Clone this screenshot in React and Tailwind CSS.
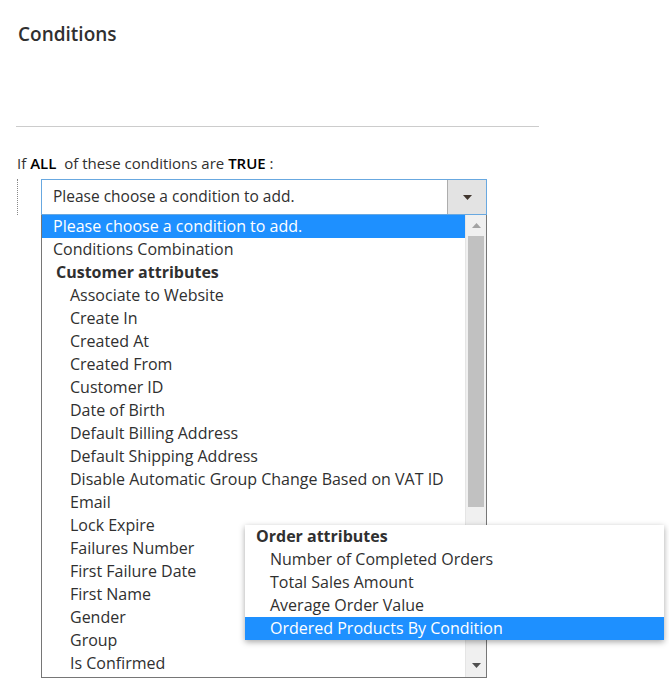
const customerAttrs = [
  'Associate to Website',
  'Create In',
  'Created At',
  'Created From',
  'Customer ID',
  'Date of Birth',
  'Default Billing Address',
  'Default Shipping Address',
  'Disable Automatic Group Change Based on VAT ID',
  'Email',
  'Lock Expire',
  'Failures Number',
  'First Failure Date',
  'First Name',
  'Gender',
  'Group',
  'Is Confirmed',
];

const orderAttrs = [
  'Number of Completed Orders',
  'Total Sales Amount',
  'Average Order Value',
  'Ordered Products By Condition',
];

function Caret({ up }) {
  return (
    <svg width="9" height="5" viewBox="0 0 9 5" className={up ? 'rotate-180' : ''}>
      <path d="M0 0h9L4.5 5z" fill="currentColor" />
    </svg>
  );
}

export default function App() {
  return (
    <div
      className="relative w-[669px] h-[678px] overflow-hidden bg-white text-[#303030]"
      style={{ fontFamily: '"Open Sans", "Noto Sans", sans-serif' }}
    >
      <h2 className="pt-[20px] pl-[18px] text-[19px] leading-[28px] font-semibold text-[#303030]">Conditions</h2>

      <div className="ml-[16px] mt-[78px] w-[523px] border-t border-[#cccccc]" />

      <p className="mt-[25px] pl-[17px] text-[15px] leading-[22px]">
        If <b className="font-semibold text-black">ALL</b>&nbsp; of these conditions are{' '}
        <b className="font-semibold text-black">TRUE</b> :
      </p>

      <div className="flex mt-[5px] pl-[17px]">
        <div className="w-0 h-[36px] border-l border-dotted border-[#888]" />
        <div className="ml-[23px] w-[446px]">
          {/* select box */}
          <div className="flex h-[36px] border border-[#68a8e0] bg-white">
            <div className="flex-1 pl-[11px] flex items-center text-[15.5px]">Please choose a condition to add.</div>
            <div className="w-[39px] flex items-center justify-center bg-[#e3e3e3] border-l border-[#adadad] text-[#41362f]">
              <Caret />
            </div>
          </div>

          {/* open list */}
          <div className="flex h-[463px] border-l border-r border-b border-[#767676] bg-white">
            <div className="flex-1 text-[16px] leading-[23px]">
              <div className="pl-[11px] bg-[#1e90ff] text-white">Please choose a condition to add.</div>
              <div className="pl-[11px]">Conditions Combination</div>
              <div className="pl-[14px] font-bold">Customer attributes</div>
              {customerAttrs.map((a) => (
                <div key={a} className="pl-[28px] whitespace-nowrap">{a}</div>
              ))}
            </div>
            <div className="w-[21px] flex flex-col bg-[#f0f0f0] border-l border-[#e5e5e5]">
              <div className="h-[21px] flex items-center justify-center text-[#a3a3a3]">
                <Caret up />
              </div>
              <div className="mx-[2px] h-[271px] bg-[#c1c1c1]" />
              <div className="flex-1" />
              <div className="h-[23px] flex items-center justify-center text-[#505050]">
                <Caret />
              </div>
            </div>
          </div>
        </div>
      </div>

      {/* overlay list */}
      <div className="absolute left-[245px] top-[525px] w-[419px] bg-white shadow-[0_2px_6px_rgba(0,0,0,0.35)] text-[16px] leading-[23px]">
        <div className="pl-[11px] font-bold">Order attributes</div>
        {orderAttrs.map((a, i) => (
          <div
            key={a}
            className={`pl-[25px] ${i === orderAttrs.length - 1 ? 'bg-[#1e90ff] text-white' : ''}`}
          >
            {a}
          </div>
        ))}
      </div>
    </div>
  );
}
